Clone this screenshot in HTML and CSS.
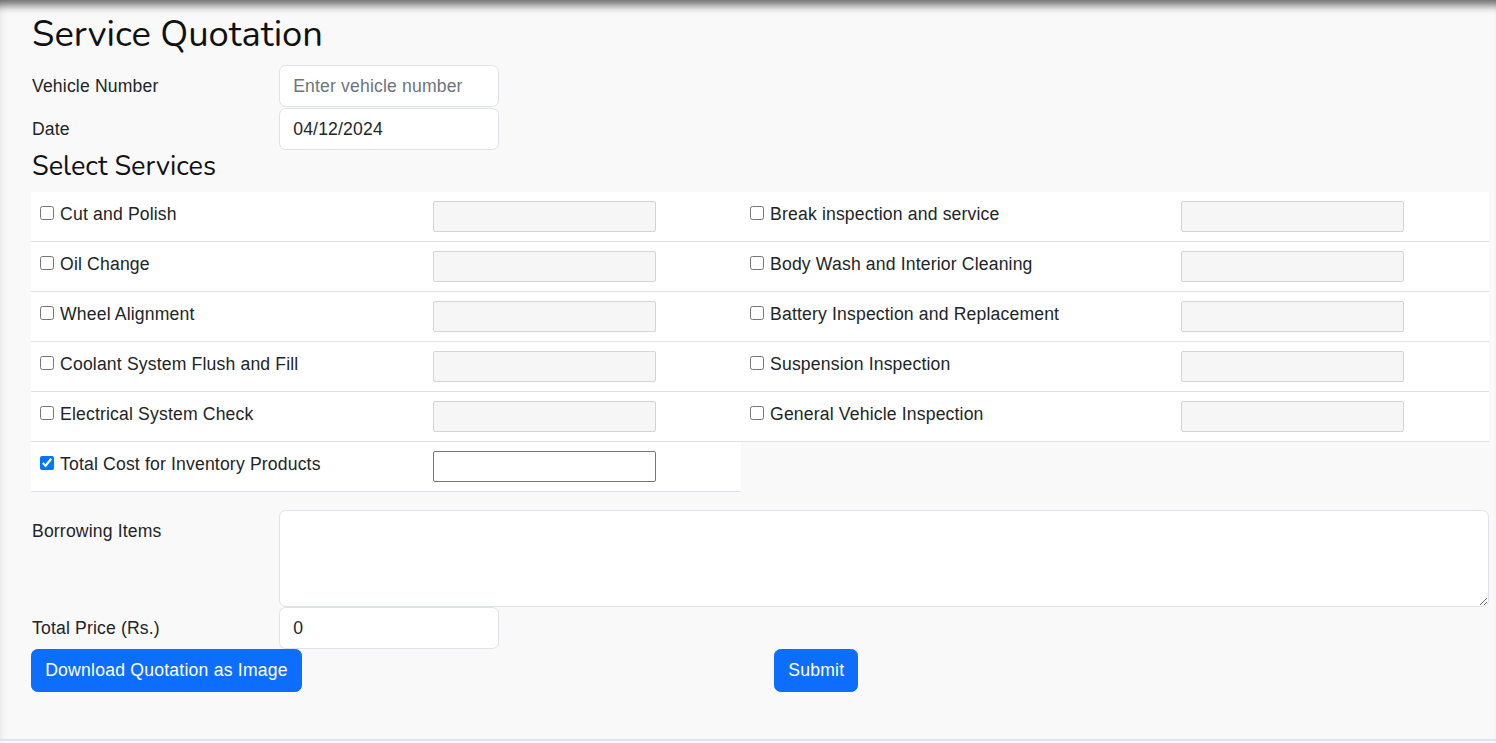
FILE: index.html
```html
<!DOCTYPE html>
<html>
<head>
<meta charset="utf-8">
<link rel="stylesheet" href="styles.css">
</head>
<body>
<div class="page">
  <h2 class="title">Service Quotation</h2>
  <div class="form-row">
    <label class="form-label">Vehicle Number</label>
    <input class="form-control short" type="text" placeholder="Enter vehicle number">
  </div>
  <div class="form-row">
    <label class="form-label">Date</label>
    <input class="form-control short" type="text" value="04/12/2024">
  </div>
  <h4 class="subtitle">Select Services</h4>
  <div class="services">
    <div class="cell"><label class="check"><input type="checkbox"> Cut and Polish</label></div>
    <div class="cell"><input class="price" type="text" disabled></div>
    <div class="cell"><label class="check"><input type="checkbox"> Break inspection and service</label></div>
    <div class="cell"><input class="price" type="text" disabled></div>

    <div class="cell"><label class="check"><input type="checkbox"> Oil Change</label></div>
    <div class="cell"><input class="price" type="text" disabled></div>
    <div class="cell"><label class="check"><input type="checkbox"> Body Wash and Interior Cleaning</label></div>
    <div class="cell"><input class="price" type="text" disabled></div>

    <div class="cell"><label class="check"><input type="checkbox"> Wheel Alignment</label></div>
    <div class="cell"><input class="price" type="text" disabled></div>
    <div class="cell"><label class="check"><input type="checkbox"> Battery Inspection and Replacement</label></div>
    <div class="cell"><input class="price" type="text" disabled></div>

    <div class="cell"><label class="check"><input type="checkbox"> Coolant System Flush and Fill</label></div>
    <div class="cell"><input class="price" type="text" disabled></div>
    <div class="cell"><label class="check"><input type="checkbox"> Suspension Inspection</label></div>
    <div class="cell"><input class="price" type="text" disabled></div>

    <div class="cell"><label class="check"><input type="checkbox"> Electrical System Check</label></div>
    <div class="cell"><input class="price" type="text" disabled></div>
    <div class="cell"><label class="check"><input type="checkbox"> General Vehicle Inspection</label></div>
    <div class="cell"><input class="price" type="text" disabled></div>

    <div class="cell"><label class="check"><input type="checkbox" checked> Total Cost for Inventory Products</label></div>
    <div class="cell"><input class="price active" type="text"></div>
  </div>
  <div class="form-row borrow">
    <label class="form-label">Borrowing Items</label>
    <textarea class="form-control area"></textarea>
  </div>
  <div class="form-row">
    <label class="form-label">Total Price (Rs.)</label>
    <input class="form-control short" type="text" value="0">
  </div>
  <div class="actions">
    <div><button class="btn">Download Quotation as Image</button></div>
    <div><button class="btn">Submit</button></div>
  </div>
</div>
</body>
</html>
```

FILE: styles.css
```css
html, body {
  margin: 0;
  padding: 0;
}
body {
  background: #f9f9f9;
  font-family: "Liberation Sans", Arial, sans-serif;
  font-size: 17.6px;
  line-height: 26.4px;
  letter-spacing: 0.16px;
  color: #212529;
}
.page {
  height: 741px;
  box-sizing: border-box;
  padding: 13px 7px 0 31px;
  border-bottom: 2px solid #dbe6f5;
  box-shadow: inset 0 13px 10px -8px rgba(0,0,0,0.6), inset 14px 0 10px -12px rgba(0,0,0,0.06);
}
.title {
  font-family: "Nunito", "Lato", sans-serif;
  font-weight: 400;
  font-size: 36.4px;
  line-height: 43px;
  letter-spacing: 0;
  margin: 0 0 9px 1px;
  color: #111;
}
.subtitle {
  font-family: "Nunito", "Lato", sans-serif;
  font-weight: 400;
  font-size: 27.1px;
  line-height: 32px;
  letter-spacing: 0;
  margin: 0 0 9px 1px;
  color: #111;
}
.form-row {
  display: flex;
  align-items: flex-start;
  margin-bottom: 1px;
}
.form-label {
  width: 248px;
  flex: none;
  padding: 7.9px 0 7.5px 1px;
  box-sizing: border-box;
}
.form-control {
  font-family: "Liberation Sans", Arial, sans-serif;
  font-size: 17.6px;
  line-height: 26.4px;
  letter-spacing: 0.16px;
  color: #212529;
  background: #fff;
  border: 1px solid #dee2e6;
  border-radius: 6.6px;
  padding: 6.6px 13.2px;
  box-sizing: border-box;
  outline: none;
}
.form-control::placeholder {
  color: #6c757d;
}
.short {
  width: 220px;
  height: 42px;
}
.area {
  flex: 1;
  height: 97px;
  resize: vertical;
}
.borrow {
  margin-top: 18px;
  margin-bottom: 0;
}
.services {
  display: grid;
  grid-template-columns: 393.2px 316.8px 431px 317px;
}
.cell {
  background: #fff;
  border-bottom: 1px solid #dee2e6;
  padding: 8.8px;
  height: 50px;
  box-sizing: border-box;
}
.check {
  display: inline-flex;
  align-items: center;
  white-space: nowrap;
}
.check input {
  width: 14.3px;
  height: 14.3px;
  margin: 0 6px 0 0;
  position: relative;
  top: -1px;
}
.price {
  display: block;
  width: 223px;
  height: 31px;
  box-sizing: border-box;
  background: #f6f6f6;
  border: 1px solid #d4d4d4;
  border-radius: 2px;
  margin: 0;
  font-size: 15px;
}
.price.active {
  background: #fff;
  border: 1px solid #767676;
}
.actions {
  display: grid;
  grid-template-columns: 1fr 1fr;
  column-gap: 28px;
  margin-top: -1px;
}
.btn {
  font-family: "Liberation Sans", Arial, sans-serif;
  font-size: 17.6px;
  line-height: 26.4px;
  letter-spacing: 0.22px;
  color: #fff;
  background: #0d6efd;
  border: 1px solid #0d6efd;
  border-radius: 6.6px;
  padding: 6px 13.2px 7.2px;
  height: 43px;
  cursor: pointer;
}
```
